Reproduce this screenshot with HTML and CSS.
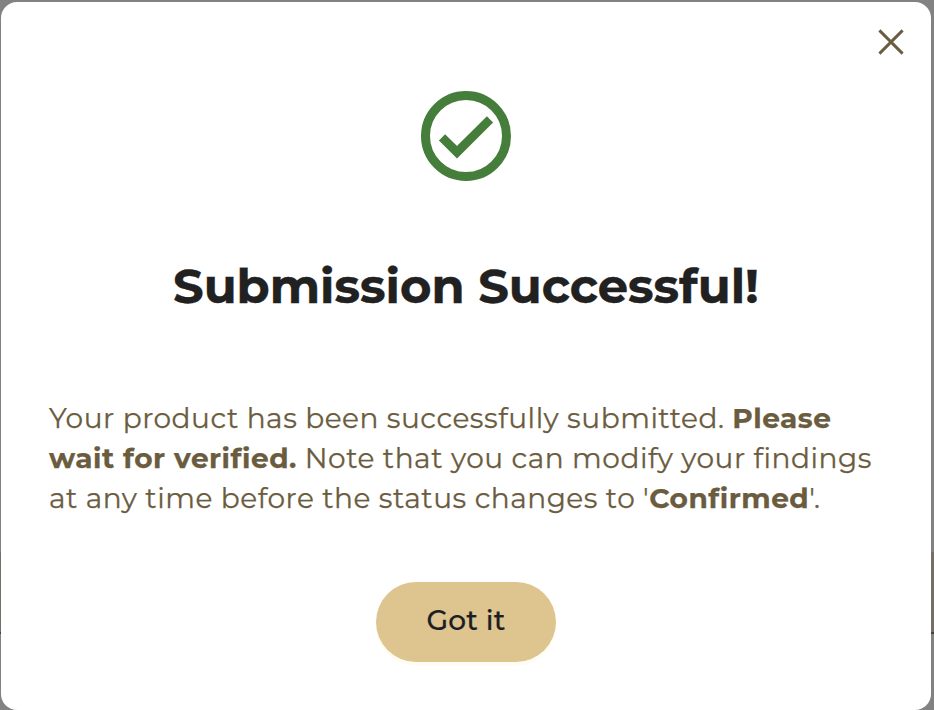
FILE: index.html
```html
<!DOCTYPE html>
<html lang="en">
<head>
<meta charset="utf-8">
<title>Submission Successful</title>
<link rel="stylesheet" href="styles.css">
</head>
<body>
<main class="dialog" role="dialog" aria-labelledby="title">
  <button class="close" aria-label="Close">
    <svg width="28" height="28" viewBox="0 0 28 28"><path d="M2.4 2.4L25.6 25.6M25.6 2.4L2.4 25.6" fill="none" stroke="#6b5c40" stroke-width="2.9"/></svg>
  </button>
  <svg class="status" width="90" height="90" viewBox="0 0 90 90">
    <circle cx="45" cy="45" r="40.5" fill="none" stroke="#457e3b" stroke-width="9"/>
    <path d="M21 46.4L36 61.2L69 28.3" fill="none" stroke="#457e3b" stroke-width="8.8"/>
  </svg>
  <h1 class="title" id="title">Submission Successful!</h1>
  <p class="message">Your product has been successfully submitted. <strong>Please wait for verified.</strong> Note that you can modify your findings at any time before the status changes to '<strong>Confirmed</strong>'.</p>
  <button class="confirm">Got it</button>
</main>
</body>
</html>
```
FILE: styles.css
```css
* {
  box-sizing: border-box;
}

body {
  height: 710px;
  margin: 0;
  padding: 2px 3px 0 1px;
  overflow: hidden;
  background: linear-gradient(#828282 0 552px, #747066 552px 632px, #46423e 632px 634px, #828282 634px);
  font-family: Montserrat, Inter, sans-serif;
}

.dialog {
  position: relative;
  display: flex;
  flex-direction: column;
  align-items: center;
  height: 708px;
  padding: 89px 48px 48px;
  border-radius: 16px;
  background: #fff;
}

.close {
  position: absolute;
  top: 26px;
  right: 26px;
  width: 28px;
  height: 28px;
  padding: 0;
  border: 0;
  background: none;
}

.close svg,
.status {
  display: block;
}

.title {
  margin: 75px 0 0;
  color: #212121;
  font-size: 48px;
  font-weight: 700;
  line-height: 60px;
  -webkit-text-stroke: 0.4px;
}

.message {
  align-self: stretch;
  margin: 82px 0 0;
  color: #6b5c40;
  font-size: 28px;
  line-height: 40px;
  letter-spacing: 0.52px;
  -webkit-text-stroke: 0.25px;
}

.message strong {
  font-weight: 700;
}

.confirm {
  width: 180px;
  height: 80px;
  margin: 64px 0 0;
  padding: 0 0 4px;
  border: 0;
  border-radius: 40px;
  background: #dec48e;
  box-shadow: 0 4px 0 #fffcf3;
  color: #1c1e24;
  font: 500 28px/40px Montserrat, Inter, sans-serif;
  letter-spacing: 0.2px;
  -webkit-text-stroke: 0.2px;
}
```
